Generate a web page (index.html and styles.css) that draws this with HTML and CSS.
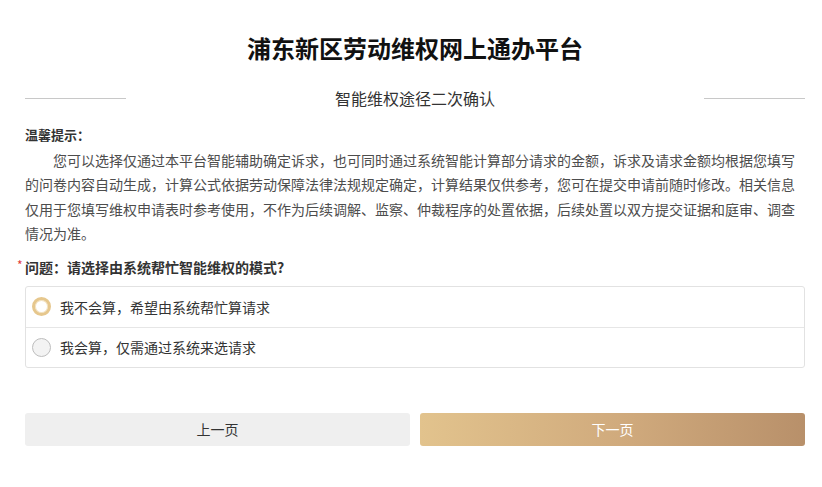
FILE: index.html
```html
<!DOCTYPE html>
<html lang="zh-CN">
<head>
<meta charset="utf-8">
<title>浦东新区劳动维权网上通办平台</title>
<link rel="stylesheet" href="styles.css">
</head>
<body>
<div class="page">
  <h1 class="title">浦东新区劳动维权网上通办平台</h1>
  <div class="subtitle-row">
    <span class="rule"></span>
    <h2 class="subtitle">智能维权途径二次确认</h2>
    <span class="rule"></span>
  </div>
  <div class="tip-title">温馨提示：</div>
  <p class="tip-text">您可以选择仅通过本平台智能辅助确定诉求，也可同时通过系统智能计算部分请求的金额，诉求及请求金额均根据您填写的问卷内容自动生成，计算公式依据劳动保障法律法规规定确定，计算结果仅供参考，您可在提交申请前随时修改。相关信息仅用于您填写维权申请表时参考使用，不作为后续调解、监察、仲裁程序的处置依据，后续处置以双方提交证据和庭审、调查情况为准。</p>
  <div class="question"><span class="required">*</span>问题：请选择由系统帮忙智能维权的模式?</div>
  <div class="options">
    <label class="option">
      <span class="radio radio-checked"></span>
      <span class="option-text">我不会算，希望由系统帮忙算请求</span>
    </label>
    <label class="option">
      <span class="radio"></span>
      <span class="option-text">我会算，仅需通过系统来选请求</span>
    </label>
  </div>
  <div class="actions">
    <button class="btn btn-prev">上一页</button>
    <button class="btn btn-next">下一页</button>
  </div>
</div>
</body>
</html>
```
FILE: styles.css
```css
* { box-sizing: border-box; }
html, body {
  margin: 0;
  padding: 0;
  background: #ffffff;
}
body {
  font-family: "Noto Sans CJK SC", "Microsoft YaHei", sans-serif;
  color: #333333;
}
.page {
  padding: 0 17px 0 25px;
}
.title {
  margin: 0;
  padding-top: 32px;
  font-size: 24px;
  line-height: 32px;
  font-weight: 700;
  color: #111111;
  text-align: center;
}
.subtitle-row {
  margin-top: 22px;
  display: flex;
  align-items: center;
  justify-content: space-between;
  height: 24px;
}
.rule {
  display: block;
  width: 101px;
  height: 1px;
  background: #c8c8c8;
}
.subtitle {
  margin: 0;
  font-size: 16px;
  line-height: 24px;
  font-weight: 400;
  color: #333333;
}
.tip-title {
  margin-top: 13px;
  font-size: 13px;
  line-height: 24.5px;
  font-weight: 700;
  color: #333333;
}
.tip-text {
  margin: 0;
  font-size: 14px;
  line-height: 24.5px;
  text-indent: 2em;
  color: #4d4d4d;
}
.question {
  position: relative;
  margin-top: 9px;
  font-size: 14px;
  line-height: 24px;
  font-weight: 700;
  color: #333333;
}
.required {
  position: absolute;
  left: -8px;
  top: -2px;
  color: #e23b3b;
  font-size: 12px;
  font-weight: 400;
}
.options {
  margin-top: 7px;
  border: 1px solid #e2e2e2;
  border-radius: 3px;
}
.option {
  display: flex;
  align-items: center;
  gap: 9px;
  height: 40px;
  padding-left: 6px;
}
.option + .option {
  border-top: 1px solid #e6e6e6;
}
.radio {
  display: block;
  width: 19px;
  height: 19px;
  border-radius: 50%;
  border: 1px solid #bdbdbd;
  background: #f3f3f3;
}
.radio-checked {
  border: 3px solid #e6c78d;
  background: #ffffff;
  box-shadow: inset 0 0 0 1px #f3e3c2;
}
.option-text {
  font-size: 14px;
  color: #333333;
}
.actions {
  margin-top: 45px;
  display: flex;
  gap: 10px;
}
.btn {
  flex: 1;
  height: 33px;
  border: 0;
  border-radius: 3px;
  font-family: "Noto Sans CJK SC", "Microsoft YaHei", sans-serif;
  font-size: 14px;
  cursor: pointer;
}
.btn-prev {
  background: #efefef;
  color: #333333;
}
.btn-next {
  background: linear-gradient(90deg, #e2c38d 0%, #cfa97c 55%, #b8906a 100%);
  color: #ffffff;
}
```
